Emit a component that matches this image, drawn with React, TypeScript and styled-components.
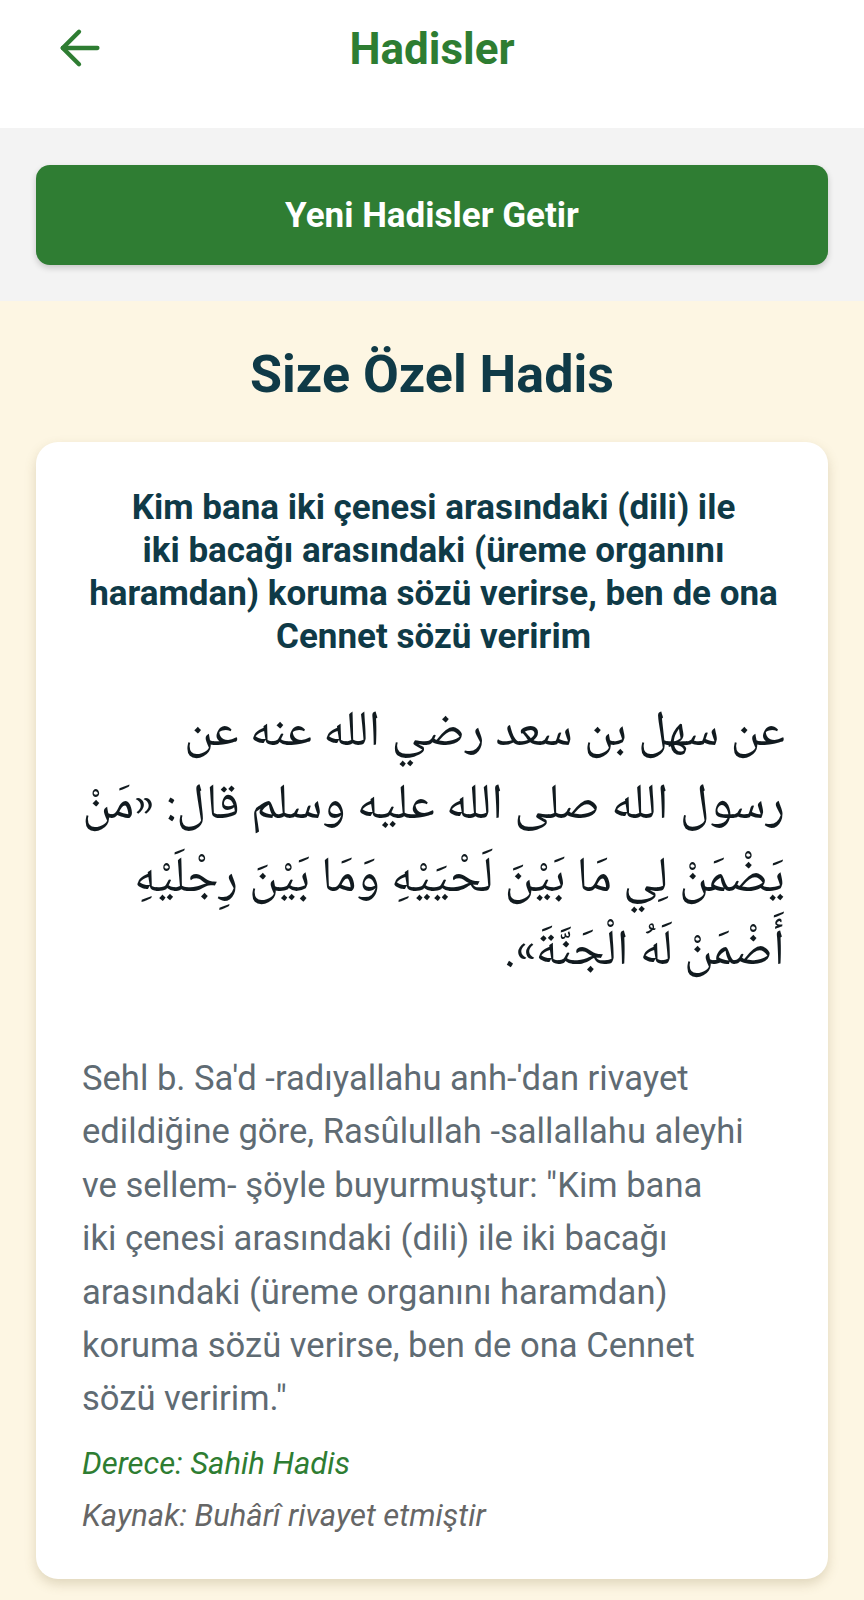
import React from "react";
import styled, { createGlobalStyle } from "styled-components";

const Global = createGlobalStyle`
  html, body { margin: 0; padding: 0; background: #fdf6e3; }
  body { font-family: Roboto, "Noto Sans", Arial, sans-serif; }
  * { box-sizing: border-box; }
`;

const Page = styled.div`
  width: 864px;
  min-height: 1600px;
  display: flex;
  flex-direction: column;
  background: #fdf6e3;
`;

const Header = styled.header`
  height: 128px;
  background: #ffffff;
  display: grid;
  grid-template-columns: 140px 1fr 140px;
  align-items: start;
`;

const BackButton = styled.button`
  border: none;
  background: transparent;
  padding: 0;
  margin: 22px 0 0 53px;
  width: 52px;
  height: 52px;
  display: flex;
  align-items: center;
  justify-content: center;
  color: #2e7d32;
`;

const HeaderTitle = styled.h1`
  margin: 23px 0 0;
  text-align: center;
  font-size: 44px;
  line-height: 52px;
  font-weight: 700;
  color: #2e7d32;
`;

const ActionBar = styled.div`
  background: #f3f3f3;
  padding: 37px 36px 36px;
`;

const PrimaryButton = styled.button`
  width: 100%;
  height: 100px;
  border: none;
  border-radius: 14px;
  background: #2f7d33;
  color: #ffffff;
  font-family: Roboto, sans-serif;
  font-size: 35px;
  font-weight: 700;
  box-shadow: 0 3px 6px rgba(0, 0, 0, 0.18);
`;

const Content = styled.main`
  padding: 44px 36px 22px;
  display: flex;
  flex-direction: column;
  gap: 37px;
`;

const SectionTitle = styled.h2`
  margin: 0;
  text-align: center;
  font-size: 52px;
  line-height: 60px;
  font-weight: 700;
  color: #0f3a47;
`;

const Card = styled.article`
  background: #ffffff;
  border-radius: 22px;
  padding: 44px 43px 43px 46px;
  box-shadow: 0 5px 12px rgba(120, 100, 50, 0.22);
  display: flex;
  flex-direction: column;
`;

const HadisTitle = styled.h3`
  margin: 0 0 40px;
  text-align: center;
  font-size: 35px;
  line-height: 43px;
  font-weight: 700;
  color: #0f3a47;
`;

const Line = styled.span`
  display: block;
  white-space: nowrap;
`;

const Arabic = styled.p`
  margin: 0 0 62px;
  direction: rtl;
  text-align: right;
  font-family: "Noto Naskh Arabic", "Noto Sans Arabic", "DejaVu Sans", serif;
  font-size: 50px;
  line-height: 73px;
  color: #111a1f;
`;

const Translation = styled.p`
  margin: 0 0 18px;
  font-size: 34.6px;
  line-height: 53.4px;
  color: #5f6b73;
`;

const Meta = styled.p<{ $tone: "green" | "gray" }>`
  margin: 0;
  font-style: italic;
  font-size: 31px;
  line-height: 40px;
  color: ${(p) => (p.$tone === "green" ? "#2e7d32" : "#666666")};
  & + & {
    margin-top: 12px;
  }
`;

const titleLines = [
  "Kim bana iki çenesi arasındaki (dili) ile",
  "iki bacağı arasındaki (üreme organını",
  "haramdan) koruma sözü verirse, ben de ona",
  "Cennet sözü veririm",
];

const arabicLines = [
  "عن سهل بن سعد رضي الله عنه عن",
  "رسول الله صلى الله عليه وسلم قال: «مَنْ",
  "يَضْمَنْ لِي مَا بَيْنَ لَحْيَيْهِ وَمَا بَيْنَ رِجْلَيْهِ",
  "أَضْمَنْ لَهُ الْجَنَّةَ».",
];

const translationLines = [
  "Sehl b. Sa'd -radıyallahu anh-'dan rivayet",
  "edildiğine göre, Rasûlullah -sallallahu aleyhi",
  "ve sellem- şöyle buyurmuştur: \"Kim bana",
  "iki çenesi arasındaki (dili) ile iki bacağı",
  "arasındaki (üreme organını haramdan)",
  "koruma sözü verirse, ben de ona Cennet",
  "sözü veririm.\"",
];

export default function App() {
  return (
    <Page>
      <Global />
      <Header>
        <BackButton aria-label="Geri">
          <svg width="52" height="52" viewBox="0 0 24 24" fill="none" stroke="currentColor" strokeWidth="2" strokeLinecap="round" strokeLinejoin="round">
            <path d="M20.5 12H4.5" />
            <path d="M12 4.5L4.5 12l7.5 7.5" />
          </svg>
        </BackButton>
        <HeaderTitle>Hadisler</HeaderTitle>
        <div />
      </Header>
      <ActionBar>
        <PrimaryButton>Yeni Hadisler Getir</PrimaryButton>
      </ActionBar>
      <Content>
        <SectionTitle>Size Özel Hadis</SectionTitle>
        <Card>
          <HadisTitle>
            {titleLines.map((l) => (
              <Line key={l}>{l}</Line>
            ))}
          </HadisTitle>
          <Arabic>
            {arabicLines.map((l) => (
              <Line key={l}>{l}</Line>
            ))}
          </Arabic>
          <Translation>
            {translationLines.map((l) => (
              <Line key={l}>{l}</Line>
            ))}
          </Translation>
          <Meta $tone="green">Derece: Sahih Hadis</Meta>
          <Meta $tone="gray">Kaynak: Buhârî rivayet etmiştir</Meta>
        </Card>
      </Content>
    </Page>
  );
}
